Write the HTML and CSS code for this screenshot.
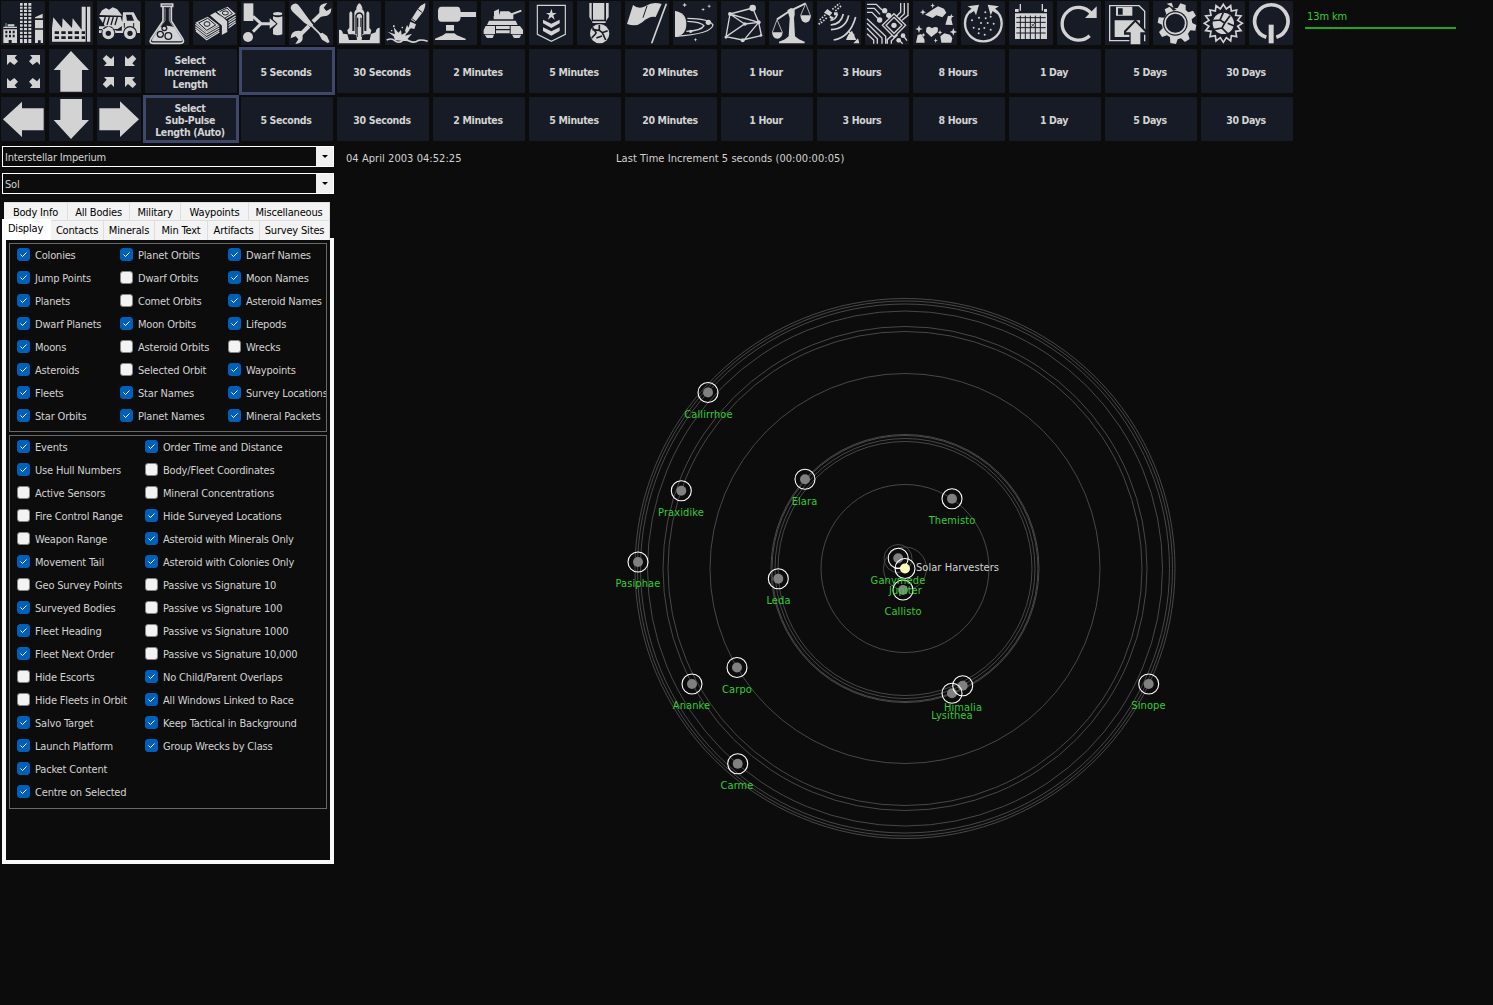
FILE: index.html
```html
<!DOCTYPE html>
<html lang="en">
<head>
<meta charset="utf-8">
<title>Tactical Map</title>
<link rel="stylesheet" href="styles.css">
</head>
<body>
<header class="top">
<div class="toolbar">
<div class="row">
<button class="btn"><svg viewBox="0 0 132 132"><path d="M57 6h9v8h-9zM69 6h9v8h-9zM81 6h10v8h-10zM57 17h34v6H57zM57 26h34v7H57zM57 37h34v7H57zM57 48h34v7H57zM57 59h34v7H57zM57 70h34v7H57zM57 81h34v7H57zM57 92h34v7H57zM57 103h34v7H57zM57 114h34v12H57zM102 49l23-11v14h-23zM102 57h24v25h-24zM102 86h24v40h-7v-8h-8v8h-9zM7 77h41v49H32v-9h-9v9H7zM14 66h2v11h-2zM20 70h20v6H20z"/><path class="k" d="M67 6v120M80 6v120M7 83h41" stroke-width="4"/><path class="k" d="M13 93h30M13 105h30" stroke-width="7" stroke-dasharray="6 5"/></svg></button>
<button class="btn"><svg viewBox="0 0 132 132"><path d="M9 122V82l4-33 26 32 2-29 28 29 2-29 27 34V17h12v105zM114 17h10v105h-10z"/><path class="d" d="M17 91h13v8H17zM37 91h13v8H37zM57 91h13v8H57zM77 91h13v8H77zM17 106h13v8H17zM37 106h13v8H37zM57 106h13v8H57zM77 106h13v8H77zM98 91h10v8H98zM98 106h10v8H98z"/></svg></button>
<button class="btn"><svg viewBox="0 0 132 132"><path d="M7 42l8-14 12-7 9 5 11-7 13 5 12 15 3 5zM6 48h65l8 25-17 11H6v-8h18zM78 34h32l12 22 7 6v34h-9a21 21 0 0 0-42 0H55a21 21 0 0 0-42 0H6v-8h14l14-12 25 13h15z"/><circle cx="34" cy="97" r="13" fill="none" stroke="#d3d3d3" stroke-width="10"/><circle cx="99" cy="97" r="13" fill="none" stroke="#d3d3d3" stroke-width="10"/><path class="d" d="M87 41h17l7 18H90z"/><path class="k" d="M25 48l-7 24M37 48l-7 24M49 48l-7 24M61 48l-7 24" stroke-width="4"/><path class="k" d="M82 66v14M110 66v14" stroke-width="3"/></svg></button>
<button class="btn"><svg viewBox="0 0 132 132"><path class="l" stroke-width="5" d="M49 9h34v7H49zM54 17v43L18 113q-7 14 6 14h82q14 0 7-14L79 60V17"/><path d="M44 79q21-10 45 0l21 34q4 8-5 8H27q-9 0-5-8z"/><path class="l" stroke-width="2" d="M60 22v37L42 82M73 22v37l15 23"/><g fill="#171b26"><circle cx="58" cy="82" r="9"/><circle cx="46" cy="100" r="11"/><circle cx="70" cy="105" r="12"/></g><g><circle cx="58" cy="82" r="5"/><circle cx="46" cy="100" r="7"/><circle cx="70" cy="105" r="8"/></g></svg></button>
<button class="btn"><svg viewBox="0 0 132 132"><path d="M7 65l37-18 33 25-36 22zM71 32l33-15 24 21-35 20z"/><path d="M51 43l16-9 36 27v32l-18 10V73z"/><path class="l" stroke-width="3.500" d="M7 70l34 26 38-22M7 77l34 26 38-22M7 84l34 26 38-22M9 90l32 26 38-23M105 60l23-15M105 67l23-15M105 74l23-15M105 82l23-17"/><path class="k" stroke-width="3" d="M17 66l27-14 24 20-27 16zM80 32l22-11 16 17-23 14M48 46l37 28v30M70 33l35 26v31"/><ellipse class="k" cx="42" cy="69" rx="9" ry="7" stroke-width="3"/><ellipse class="k" cx="97" cy="36" rx="9" ry="6" stroke-width="3"/></svg></button>
<button class="btn"><svg viewBox="0 0 132 132"><path d="M8 7h29v53H8z"/><circle cx="21" cy="108" r="15"/><path class="l" stroke-width="9" d="M36 46l24 22-24 24M60 68h36"/><path d="M86 52l20 16-20 15z"/><path d="M96 46q14 6 28 0v54q-14 6-28 0V83l14-15-14-13z"/><ellipse cx="110" cy="38" rx="14" ry="5"/></svg></button>
<button class="btn"><svg viewBox="0 0 132 132"><path d="M8 13q12-11 22 1l29 40 14 18-7 6-20-13L11 32Q1 22 8 13z"/><path class="l" stroke-width="5" d="M64 70l34 34"/><path d="M90 100l10-5 14 10 8 18-6 3-17-10z"/><path class="l" stroke-width="12" d="M101 34L72 62M60 75L32 103"/><path d="M91 26q-2-18 24-20l-11 14 8 10 15-8q0 24-23 24l-13 2zM41 108q2 18-22 21l9-14-8-9-15 6q0-22 23-23l12 2z"/></svg></button>
<button class="btn"><svg viewBox="0 0 132 132"><path d="M60 15q7-17 14 0l3 8H57zM52 34q5-12 15-12t15 12v67h-6l-2 16H60l-2-16h-6zM37 37q4-12 9 0v53h8v10H34l-3-12 6-8zM88 37q4-12 9 0v43l6 8-3 12H80V90h8zM6 127V86q10-1 12 12l13 2 5 17h62l4-18 14-5q1-14 12-14v47z"/><path class="k" stroke-width="4" d="M57 100V44q3-8 10-8t10 8v56M62 50v58M72 50v58"/><path d="M62 78h10v45H62z"/></svg></button>
<button class="btn"><svg viewBox="0 0 132 132"><path d="M121 6q0 18-9 29L90 64 78 56l19-30Q106 12 121 6zM76 62l17 8-5 14-10-2-9 6 2-10zM66 72l8 14-9 12-5-9zM30 118l-4-12-18-14 22 8-4-22 14 17 8-8 2 14 16-9-5 12 20-6-14 17 4 6z"/><path class="k" stroke-width="3" d="M99 25l12 9M81 53l14 11"/><path class="l" stroke-width="5" d="M5 117q15-7 24 2 12 10 24-1 10-5 20 2 15 8 27-2 11-3 28 3"/><path d="M24 73h5v5h-5zM18 87h4v4h-4zM50 77h4v5h-4z"/></svg></button>
<button class="btn"><svg viewBox="0 0 132 132"><path d="M25 17h48q9 0 10 16h46v15H83q-1 14-9 14H25q-9 0-10-12V29q1-12 10-12zM39 72h24v17H39zM38 97h26l8 6 26 10v4H6v-4l24-10z"/></svg></button>
<button class="btn"><svg viewBox="0 0 132 132"><path d="M39 31l15-7v20l-15 5zM58 31h26l13 10v14H38V45l16-2zM24 59h80l6 13H18zM14 75h28v24H8V87zM89 75h28l9 12v12H89zM45 75h41v9H45zM45 88h41v9H45zM11 101h28l-4 10H18zM93 101h28l-6 10H99z"/><path class="l" stroke-width="6" d="M75 46l46-17"/></svg></button>
<button class="btn"><svg viewBox="0 0 132 132"><path class="l" stroke-width="3.500" d="M25 13h84v87l-42 21-42-21z"/><path d="M67 23l4 13h12l-10 7 4 13-10-8-10 8 4-13-10-7h12zM42 56l25 12 25-12v11L67 81 42 67zM42 79l25 12 25-12v11l-25 14-25-14z"/></svg></button>
<button class="btn"><svg viewBox="0 0 132 132"><path d="M37 6h7v54l-7-12zM48 6h34v50H48zM87 6h8v42l-8 12zM46 61h40v5H46z"/><circle cx="68" cy="98" r="29"/><path class="k" stroke-width="5" d="M67 71v17l9 7 16-6M67 88l-21-2M76 95l10 22M58 96l-14 15M58 96l-12-17M58 111l17-6"/></svg></button>
<button class="btn"><svg viewBox="0 0 132 132"><path d="M24 12q18 15 38 3 22-15 48-6l-18 39Q73 44 52 64q-18 15-46 5z"/><path class="k" stroke-width="3" d="M66 15L54 50"/><path class="l" stroke-width="5" d="M124 8L80 127"/></svg></button>
<button class="btn"><svg viewBox="0 0 132 132"><path d="M6 30q34 5 34 39T6 108z"/><path class="l" stroke-width="4" d="M43 52q65 0 77 20-5 27-113 34M43 61q39 1 50 13-8 16-53 17"/><circle cx="106" cy="64" r="8"/><circle cx="53" cy="91" r="5"/><path d="M35 5l2 5 5 2-5 2-2 5-2-5-5-2 5-2zM108 9l2 5 5 1-5 2-2 5-1-5-5-2 5-1zM90 20l2 4 4 1-4 2-2 4-1-4-5-2 5-1zM67 110l2 5 4 1-4 2-2 4-1-4-4-2 4-1z"/></svg></button>
<button class="btn"><svg viewBox="0 0 132 132"><path class="l" stroke-width="4" d="M27 39l68-18M27 39l86 25M27 39l44 30M27 39L15 107M95 21l18 43M113 64l8 38M113 64l-45 54M113 64L71 69 15 107l50 10 55-13"/><circle cx="95" cy="21" r="10"/><circle cx="27" cy="39" r="6"/><circle cx="113" cy="64" r="6"/><circle cx="72" cy="69" r="5"/><circle cx="15" cy="109" r="4"/><circle cx="65" cy="118" r="6"/><circle cx="120" cy="103" r="4"/></svg></button>
<button class="btn"><svg viewBox="0 0 132 132"><path class="l" stroke-width="6" d="M24 55l38-25 48-23"/><path class="l" stroke-width="2.500" d="M24 56L10 94M24 56l16 38M110 8L95 43M110 8l14 35"/><path d="M9 94h32q-2 19-16 19T9 94zM94 43h32q-2 22-16 22T94 43zM55 28l11-7 11 4v16l-2 10 3 55 12 9 17 7v5H30v-5l18-7 11-9 3-55-3-10z"/></svg></button>
<button class="btn"><svg viewBox="0 0 132 132"><path d="M31 24l15 11-8 10-17-10zM51 34h11v9H51zM39 44l11 5-4 7-9-6z"/><path stroke="#d3d3d3" stroke-width="5" stroke-dasharray="5 4" fill="none" d="M46 25L68 7M55 30L73 14M8 57l20-18M12 66l20-18M5 70l7-8"/><path class="l" stroke-width="5" d="M40 58q16-1 21-19M41 72q31-2 38-33M42 86q45-3 53-43M50 117q49-8 66-69"/><path d="M87 117q6-19 18-28l13 28zM123 112l4 15h-18z"/><path class="l" stroke-width="4" d="M94 91l18 12"/></svg></button>
<button class="btn"><svg viewBox="0 0 132 132"><path class="l" stroke-width="4" d="M6 10h28l17 17M6 22h22l17 18M6 34h15l19 20M6 53l56 53v22M6 67l45 44v17M6 82l31 31v15M6 98l20 19v11M107 6v27L86 55M118 6v32L95 61M129 6v37l-18 15M67 128v-12l22-20M79 128v-9l19-18"/><circle cx="59" cy="29" r="8"/><circle cx="71" cy="43" r="8"/><circle cx="44" cy="57" r="8"/><circle cx="114" cy="104" r="7"/><circle cx="101" cy="118" r="7"/><path class="l" stroke-width="4" fill="#171b26" d="M118 108l8 11M105 120l8 8"/><path class="d" stroke="#d3d3d3" stroke-width="4" d="M87 38l35 35-35 35-35-35z"/><path class="l" stroke-width="4" d="M87 49l24 24-24 24-24-24z"/><circle cx="87" cy="73" r="8"/></svg></button>
<button class="btn"><svg viewBox="0 0 132 132"><path d="M36 41l22-15 17-10 18 7 7 12-12 14-18-6-11 8zM97 71l8-27 8 2 6 26zM40 81q8-8 17 1 11-8 18-1l-1 12-19 15-16-15zM9 125l5-23 10-3 10 15 1 11zM85 125l-3-19 12-9 17 4 7 10-3 14z"/><path d="M59 6l2 6 5 2-5 2-2 6-2-6-5-2 5-2zM30 25l2 6 7 3-7 2-2 7-3-7-6-2 6-3zM115 38l2 6 6 2-6 3-2 5-2-5-6-3 6-2zM18 73l3 8 8 3-8 3-3 9-3-9-8-3 8-3zM121 81l3 8 8 4-8 3-3 8-3-8-8-3 8-4zM81 87l2 5 5 2-5 2-2 6-2-6-5-2 5-2zM31 96l2 4 4 2-4 2-2 4-2-4-4-2 4-2zM68 112l2 5 5 1-5 2-2 6-2-6-4-2 4-1z"/></svg></button>
<button class="btn"><svg viewBox="0 0 132 132"><path class="l" stroke-width="7" d="M36 24q-24 16-24 43c0 30 24 54 55 54s55-24 55-54q0-27-24-43"/><path d="M20 16l34-5-9 32-6-13-13 9 7-15zM114 16l-34-5 9 32 6-13 13 9-7-15z"/><g><circle cx="73" cy="34" r="3"/><circle cx="54" cy="50" r="3"/><circle cx="74" cy="52" r="3"/><circle cx="89" cy="47" r="3"/><circle cx="33" cy="58" r="3"/><circle cx="60" cy="66" r="3"/><circle cx="80" cy="66" r="3"/><circle cx="98" cy="68" r="3"/><circle cx="38" cy="80" r="3"/><circle cx="54" cy="84" r="3"/><circle cx="70" cy="81" r="3"/><circle cx="89" cy="86" r="3"/><circle cx="53" cy="97" r="3"/><circle cx="71" cy="101" r="3"/></g></svg></button>
<button class="btn"><svg viewBox="0 0 132 132"><path d="M32 9h4v20h-4zM98 9h4v20h-4zM18 24h11v9h76v-9h9v9H18zM18 37h96v77H18z"/><path class="k" stroke-width="3" d="M34 44v70M49 44v70M64 44v70M79 44v70M94 44v70M22 50h88M22 64h88M22 80h88M22 96h88"/><path class="k" stroke-width="2" d="M66 78l12-12M68 69l9 9"/></svg></button>
<button class="btn"><svg viewBox="0 0 132 132"><path class="l" stroke-width="10" d="M98 104a49 49 0 1 1 5-66"/><path d="M119 16v35H84z"/></svg></button>
<button class="btn"><svg viewBox="0 0 132 132"><path class="l" stroke-width="4" d="M76 119H14V14h88l17 17v90"/><path d="M33 17h49v27H33zM29 58h76v50H29z"/><path class="d" d="M39 22h14v19H39zM91 55l35 35v11h-17v28H73v-28H57V90z"/><path d="M91 63l30 31H106v36H77V94H62z"/></svg></button>
<button class="btn"><svg viewBox="0 0 132 132"><path d="M41 8l15-3 6 17 12-1 8-14 16 5v15l8 7 14-5 9 15-13 11 2 11 12 6-3 17-15-1-7 10 5 16-14 9-12-11-10 3-5 14-17-3-1-17-9-6-15 5-9-15 11-11-2-11-13-6 3-16 17 1 6-10-5-15 15-8 11 12 10-3z"/><circle cx="67" cy="67" r="37" fill="#171b26"/><circle class="l" cx="67" cy="67" r="31" stroke-width="5"/></svg></button>
<button class="btn"><svg viewBox="0 0 132 132"><path class="l" stroke-width="5" d="M67 10l9 14 13-10 2 16 16-3-3 16 16 2-10 13 14 9-14 9 10 13-16 2 3 16-16-3-2 16-13-10-9 14-9-14-13 10-2-16-16 3 3-16-16-2 10-13-14-9 14-9-10-13 16-2-3-16 16 3 2-16 13 10z"/><circle cx="67" cy="67" r="32"/><path class="k" stroke-width="5" d="M67 35l-10 22 14 9 16-22M71 66l-8 15 17 17M63 81l-25 5M57 57l-21 2M80 67l20 8"/></svg></button>
<button class="btn"><svg viewBox="0 0 132 132"><path class="l" stroke-width="11" d="M52 109a50 50 0 1 1 30 0"/><path d="M59 71h15v56H59z"/></svg></button>
</div>
<div class="row">
<button class="btn"><svg viewBox="0 0 132 132"><path id="out" d="M18 18H48L41 26 51 37 40 48 27 38 18 48Z"/><use href="#out" transform="matrix(-1 0 0 1 135 0)"/><use href="#out" transform="matrix(1 0 0 -1 0 135)"/><use href="#out" transform="matrix(-1 0 0 -1 135 135)"/></svg></button>
<button class="btn"><svg viewBox="0 0 132 132"><path d="M66 6l54 57H99v65H34V63H14z"/></svg></button>
<button class="btn"><svg viewBox="0 0 132 132"><path id="in" d="M51 51H21L29 43 17 29 28 18 42 30 51 21Z"/><use href="#in" transform="matrix(-1 0 0 1 135 0)"/><use href="#in" transform="matrix(1 0 0 -1 0 135)"/><use href="#in" transform="matrix(-1 0 0 -1 135 135)"/></svg></button>
<button class="btn wide">Select<br>Increment<br>Length</button><button class="btn wide selected">5 Seconds</button><button class="btn wide">30 Seconds</button><button class="btn wide">2 Minutes</button><button class="btn wide">5 Minutes</button><button class="btn wide">20 Minutes</button><button class="btn wide">1 Hour</button><button class="btn wide">3 Hours</button><button class="btn wide">8 Hours</button><button class="btn wide">1 Day</button><button class="btn wide">5 Days</button><button class="btn wide">30 Days</button>
</div>
<div class="row">
<button class="btn"><svg viewBox="0 0 132 132"><path d="M6 67l57-53v20h65v66H63v20z"/></svg></button>
<button class="btn"><svg viewBox="0 0 132 132"><path d="M66 126l54-57H99V6H34v63H14z"/></svg></button>
<button class="btn"><svg viewBox="0 0 132 132"><path d="M126 67L69 13v21H7v66h62v20z"/></svg></button>
<button class="btn wide selected">Select<br>Sub-Pulse<br>Length (Auto)</button><button class="btn wide">5 Seconds</button><button class="btn wide">30 Seconds</button><button class="btn wide">2 Minutes</button><button class="btn wide">5 Minutes</button><button class="btn wide">20 Minutes</button><button class="btn wide">1 Hour</button><button class="btn wide">3 Hours</button><button class="btn wide">8 Hours</button><button class="btn wide">1 Day</button><button class="btn wide">5 Days</button><button class="btn wide">30 Days</button>
</div>
</div>
<div class="scale">13m km</div>
</header>
<main class="main">
<aside class="side">
<div class="combo"><span>Interstellar Imperium</span><i></i></div>
<div class="combo"><span>Sol</span><i></i></div>
<div class="tabs back"><span>Body Info</span><span>All Bodies</span><span>Military</span><span>Waypoints</span><span>Miscellaneous</span></div>
<div class="tabs front"><span class="active">Display</span><span>Contacts</span><span>Minerals</span><span>Min Text</span><span>Artifacts</span><span>Survey Sites</span></div>
<div class="panel">
<div class="group three">
<label class="on">Colonies</label><label class="on">Jump Points</label><label class="on">Planets</label><label class="on">Dwarf Planets</label><label class="on">Moons</label><label class="on">Asteroids</label><label class="on">Fleets</label><label class="on">Star Orbits</label>
<label class="on">Planet Orbits</label><label>Dwarf Orbits</label><label>Comet Orbits</label><label class="on">Moon Orbits</label><label>Asteroid Orbits</label><label>Selected Orbit</label><label class="on">Star Names</label><label class="on">Planet Names</label>
<label class="on">Dwarf Names</label><label class="on">Moon Names</label><label class="on">Asteroid Names</label><label class="on">Lifepods</label><label>Wrecks</label><label class="on">Waypoints</label><label class="on">Survey Locations</label><label class="on">Mineral Packets</label>
</div>
<div class="group two">
<label class="on">Events</label><label class="on">Use Hull Numbers</label><label>Active Sensors</label><label>Fire Control Range</label><label>Weapon Range</label><label class="on">Movement Tail</label><label>Geo Survey Points</label><label class="on">Surveyed Bodies</label><label class="on">Fleet Heading</label><label class="on">Fleet Next Order</label><label>Hide Escorts</label><label>Hide Fleets in Orbit</label><label class="on">Salvo Target</label><label class="on">Launch Platform</label><label class="on">Packet Content</label><label class="on">Centre on Selected</label>
<label class="on">Order Time and Distance</label><label>Body/Fleet Coordinates</label><label>Mineral Concentrations</label><label class="on">Hide Surveyed Locations</label><label class="on">Asteroid with Minerals Only</label><label class="on">Asteroid with Colonies Only</label><label>Passive vs Signature 10</label><label>Passive vs Signature 100</label><label>Passive vs Signature 1000</label><label>Passive vs Signature 10,000</label><label class="on">No Child/Parent Overlaps</label><label class="on">All Windows Linked to Race</label><label class="on">Keep Tactical in Background</label><label class="on">Group Wrecks by Class</label>
</div>
</div>
</aside>
<section class="view">
<div class="status"><span class="date">04 April 2003 04:52:25</span><span>Last Time Increment 5 seconds (00:00:00:05)</span></div>
<svg class="map" viewBox="336 171 1157 834">
<g class="orbits"><circle cx="905" cy="568.500" r="270"/><circle cx="905" cy="568.500" r="267.500"/><circle cx="905" cy="568.500" r="264.500"/><circle cx="905" cy="568.500" r="257.500"/><circle cx="905" cy="568.500" r="242"/><circle cx="905" cy="568.500" r="237"/><circle cx="905" cy="568.500" r="195"/><circle cx="905" cy="568.500" r="134"/><circle cx="905" cy="568.500" r="133"/><circle cx="905" cy="568.500" r="130"/><circle cx="905" cy="568.500" r="127"/><circle cx="905" cy="568.500" r="84"/><circle cx="905" cy="568.500" r="21.500"/><circle cx="898" cy="558.500" r="14"/></g>
<g class="dots"><circle cx="708" cy="392.500" r="5"/><circle cx="681.300" cy="490.800" r="5"/><circle cx="638" cy="562" r="5"/><circle cx="805" cy="479.300" r="5"/><circle cx="778.300" cy="578.700" r="5"/><circle cx="952" cy="498.700" r="5"/><circle cx="898.200" cy="558.200" r="5"/><circle cx="903" cy="590" r="5"/><circle cx="737" cy="667.500" r="5"/><circle cx="692" cy="684" r="5"/><circle cx="737.700" cy="763.700" r="5"/><circle cx="962.700" cy="685.700" r="5"/><circle cx="952" cy="693.300" r="5"/><circle cx="1148.700" cy="684" r="5"/></g>
<g class="rings"><circle cx="708" cy="392.500" r="10"/><circle cx="681.300" cy="490.800" r="10"/><circle cx="638" cy="562" r="10"/><circle cx="805" cy="479.300" r="10"/><circle cx="778.300" cy="578.700" r="10"/><circle cx="952" cy="498.700" r="10"/><circle cx="898.200" cy="558.200" r="10"/><circle cx="903" cy="590" r="10"/><circle cx="737" cy="667.500" r="10"/><circle cx="692" cy="684" r="10"/><circle cx="737.700" cy="763.700" r="10"/><circle cx="962.700" cy="685.700" r="10"/><circle cx="952" cy="693.300" r="10"/><circle cx="1148.700" cy="684" r="10"/><circle cx="905" cy="568.500" r="10"/><path d="M895 568.500h10"/></g>
<circle cx="905" cy="568.500" r="5" fill="#ffffc0"/>
<g class="names"><text x="708.500" y="418">Callirrhoe</text><text x="681" y="516">Praxidike</text><text x="638" y="587">Pasiphae</text><text x="804.500" y="505">Elara</text><text x="778.500" y="604">Leda</text><text x="952" y="524">Themisto</text><text x="898" y="584">Ganymede</text><text x="905.500" y="594">Jupiter</text><text x="903" y="615">Callisto</text><text x="737" y="693">Carpo</text><text x="691.500" y="709">Ananke</text><text x="737" y="789">Carme</text><text x="963" y="711">Himalia</text><text x="952" y="719">Lysithea</text><text x="1148.500" y="709">Sinope</text></g>
<text class="fleet" x="916" y="571">Solar Harvesters</text>
</svg>
</section>
</main>
</body>
</html>
```
FILE: styles.css
```css
*, *::before, *::after { box-sizing: border-box; }
body {
  margin: 0;
  width: 1493px;
  height: 1005px;
  overflow: hidden;
  background: #0c0c0c;
  color: #d3d3d3;
  font: 11px/13px "DejaVu Sans Condensed", "DejaVu Sans", sans-serif;
  font-stretch: condensed;
  letter-spacing: -0.18px;
}
.top { display: flex; height: 145px; }
.toolbar { display: flex; flex-direction: column; gap: 4px; padding: 1px; width: 1305px; }
.row { display: flex; gap: 4px; height: 44px; }
.btn {
  width: 44px;
  height: 44px;
  flex: none;
  padding: 0;
  border: 0;
  background: #171b26;
  color: #d3d3d3;
  font: inherit;
  font-size: 10.5px;
  font-weight: bold;
  line-height: 12px;
  letter-spacing: -0.35px;
}
.btn svg { display: block; width: 44px; height: 44px; fill: #d3d3d3; }
.btn .l { fill: none; stroke: #d3d3d3; }
.btn .k { fill: none; stroke: #171b26; }
.btn .d { fill: #171b26; }
.btn.wide { width: 92px; padding: 2px 2px 0 0; }
.selected { box-shadow: 0 0 0 2px #40476d, inset 0 0 0 1px #40476d; }
.scale {
  width: 151px;
  height: 29px;
  padding: 10px 0 0 2px;
  color: #32cd32;
  border-bottom: 2px solid #22a522;
  letter-spacing: -0.1px;
}
.main { display: flex; height: 860px; }
.side { width: 336px; padding: 1px 2px; }
.combo {
  display: flex;
  justify-content: space-between;
  width: 332px;
  height: 21px;
  margin-bottom: 6px;
  border: 1px solid #fff;
  padding-left: 2px;
  line-height: 21px;
}
.combo i { width: 17px; background: #f0f0f0; display: grid; place-items: center; }
.combo i::after { content: ""; width: 6px; border: 3px solid transparent; border-top-color: #000; border-bottom: 0; }
.tabs { display: grid; color: #000; text-align: center; width: 328px; }
.tabs span {
  background: #f3f3f3;
  border: 1px solid #dedede;
  border-width: 1px 1px 0 0;
  line-height: 19px;
  white-space: nowrap;
}
.back { grid-template-columns: 64px 62px 51px 68px 81px; height: 18px; margin-top: 8px; padding-left: 2px; }
.front { grid-template-columns: 49px 53px 51px 53px 52px 70px; height: 18px; }
.front .active { background: #fff; border: 0; margin-top: -1px; padding-right: 2px; line-height: 19px; }
.panel {
  width: 332px;
  height: 626px;
  padding: 3px;
  border: 4px solid #fafafa;
  border-top-width: 2px;
}
.group {
  display: grid;
  grid-auto-flow: column;
  grid-auto-rows: 23px;
  width: 318px;
  padding-left: 7px;
  border: 1px solid #696969;
  overflow: hidden;
}
.three { height: 189px; margin-bottom: 3px; grid-template-rows: repeat(8, 23px); grid-template-columns: 103px 108px 99px; }
.two { height: 374px; grid-template-rows: repeat(16, 23px); grid-template-columns: 128px 180px; }
.group label { display: flex; align-items: center; gap: 5px; padding-bottom: 1px; white-space: nowrap; }
.group label::before {
  content: "";
  flex: none;
  width: 13px;
  height: 13px;
  margin-top: -1px;
  border: 1px solid #858585;
  border-radius: 3px;
  background: #f3f3f3;
}
.group .on::before {
  border-color: #005fb8;
  background: #005fb8 url("data:image/svg+xml,%3Csvg xmlns='http://www.w3.org/2000/svg' viewBox='0 0 11 11'%3E%3Cpath d='M2.500 5.500l2 2 4-4' fill='none' stroke='%23fff'/%3E%3C/svg%3E") center / 11px;
}
.view { width: 1157px; }
.status { display: flex; height: 26px; padding: 7px 0 0 10px; letter-spacing: 0.06px; }
.date { width: 270px; }
.map { display: block; width: 1157px; height: 834px; }
.orbits, .rings { fill: none; stroke: #484848; }
.rings { stroke: #fff; stroke-width: 1.100; }
.dots { fill: #808080; }
.names { fill: #32cd32; text-anchor: middle; letter-spacing: 0.1px; }
.fleet { fill: #d3d3d3; letter-spacing: 0.05px; }
```
